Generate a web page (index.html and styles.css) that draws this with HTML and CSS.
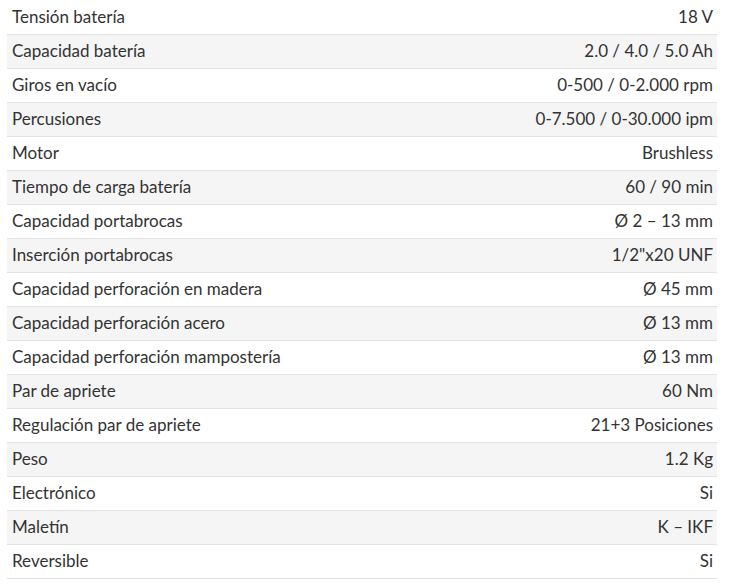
FILE: index.html
```html
<!DOCTYPE html>
<html lang="es">
<head>
<meta charset="utf-8">
<link rel="stylesheet" href="styles.css">
</head>
<body>
<table class="specs">
<tbody>
<tr><td>Tensión batería</td><td>18 V</td></tr>
<tr><td>Capacidad batería</td><td>2.0 / 4.0 / 5.0 Ah</td></tr>
<tr><td>Giros en vacío</td><td>0-500 / 0-2.000 rpm</td></tr>
<tr><td>Percusiones</td><td>0-7.500 / 0-30.000 ipm</td></tr>
<tr><td>Motor</td><td>Brushless</td></tr>
<tr><td>Tiempo de carga batería</td><td>60 / 90 min</td></tr>
<tr><td>Capacidad portabrocas</td><td>Ø 2 – 13 mm</td></tr>
<tr><td>Inserción portabrocas</td><td>1/2"x20 UNF</td></tr>
<tr><td>Capacidad perforación en madera</td><td>Ø 45 mm</td></tr>
<tr><td>Capacidad perforación acero</td><td>Ø 13 mm</td></tr>
<tr><td>Capacidad perforación mampostería</td><td>Ø 13 mm</td></tr>
<tr><td>Par de apriete</td><td>60 Nm</td></tr>
<tr><td>Regulación par de apriete</td><td>21+3 Posiciones</td></tr>
<tr><td>Peso</td><td>1.2 Kg</td></tr>
<tr><td>Electrónico</td><td>Si</td></tr>
<tr><td>Maletín</td><td>K – IKF</td></tr>
<tr><td>Reversible</td><td>Si</td></tr>
</tbody>
</table>
</body>
</html>
```
FILE: styles.css
```css
html, body {
  margin: 0;
  padding: 0;
  background: #fff;
}
body {
  font-family: Lato, "Noto Sans", sans-serif;
  font-size: 17px;
  color: #333;
}
.specs {
  margin-left: 7px;
  width: 710px;
  border-collapse: collapse;
}
.specs td {
  height: 33px;
  padding: 0 4px 0 5px;
  border-bottom: 1px solid #e2e2e2;
  vertical-align: middle;
  line-height: 20px;
  box-sizing: border-box;
}
.specs tr td {
  height: 34px;
}
.specs td:last-child {
  text-align: right;
}
.specs tr:nth-child(even) td {
  background: #f5f5f5;
}
```
